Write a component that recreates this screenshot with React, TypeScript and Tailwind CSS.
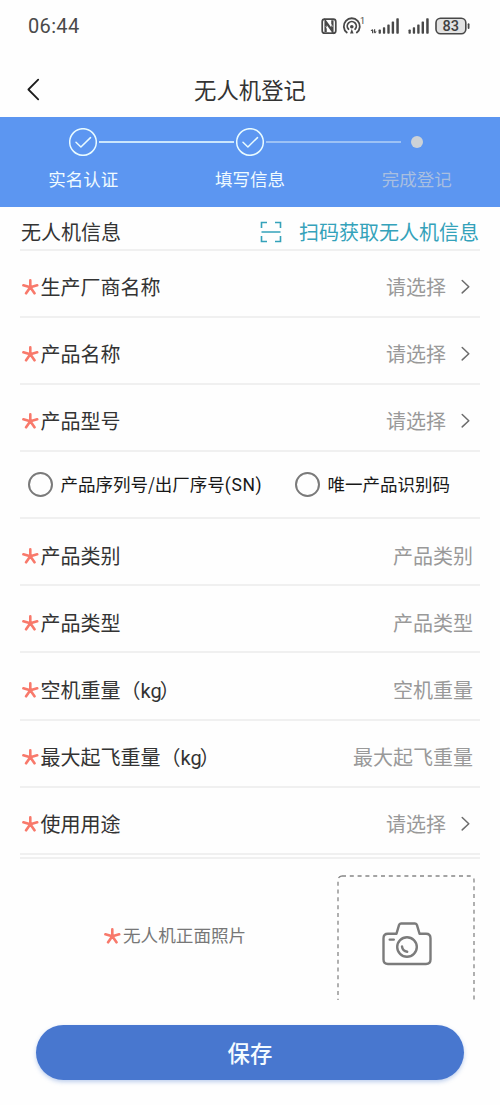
import { clsx } from 'clsx'

interface Field {
    label: string
    unit?: string
    value: string
    select?: boolean
}

const productFields: Field[] = [
    { label: '生产厂商名称', value: '请选择', select: true },
    { label: '产品名称', value: '请选择', select: true },
    { label: '产品型号', value: '请选择', select: true },
]

const detailFields: Field[] = [
    { label: '产品类别', value: '产品类别' },
    { label: '产品类型', value: '产品类型' },
    { label: '空机重量', unit: 'kg', value: '空机重量' },
    { label: '最大起飞重量', unit: 'kg', value: '最大起飞重量' },
    { label: '使用用途', value: '请选择', select: true },
]

function RequiredMark() {
    return (
        <svg className="h-4 w-[17px] shrink-0" viewBox="0 0 17 16" fill="none" stroke="#f8796b" strokeWidth="2.6" strokeLinecap="round">
            <path d="M8.3 8.2V1.4M8.3 8.2L1.4 6.3M8.3 8.2L15.2 6.3M8.3 8.2L4.1 14.3M8.3 8.2L12.5 14.3" />
        </svg>
    )
}

function StatusBar() {
    return (
        <div className="flex h-[52px] items-center justify-between pl-7 pr-[30px] text-[#4a4a4a]">
            <span className="font-['Roboto',sans-serif] text-[20px] leading-6 tracking-[0.35px]">06:44</span>
            <div className="flex items-center">
                <svg className="h-[22px] w-[150px]" viewBox="320 14 150 22" fill="none" stroke="#484848">
                    <rect x="322.2" y="18.2" width="13.6" height="14" rx="2.5" strokeWidth="1.7" />
                    <path d="M325.6 31V20.5L332.4 30V19.2" strokeWidth="2.3" />
                    <path d="M328 19.5L332.6 25.5M325.8 25.5L330 31.3" stroke="#fff" strokeWidth=".8" />
                    <g strokeWidth="1.8" strokeLinecap="round">
                        <path d="M346.8 31.5A8 8 0 1 1 356.8 31.5" />
                        <path d="M348.5 28.2A4.5 4.5 0 1 1 355.1 28.2" />
                    </g>
                    <circle cx="351.8" cy="25.8" r="1.8" fill="#484848" stroke="none" />
                    <path d="M350 32.4L351.8 28L353.6 32.4Z" fill="#484848" stroke="none" />
                    <text x="360" y="23.2" fill="#484848" stroke="none" fontSize="9" fontFamily="Roboto, sans-serif">1</text>
                    <g fill="#484848" stroke="none">
                        <path d="M370.5 30L372.3 28L373.3 29.2V32.2H372V30ZM374 28.2H375.2V30.4H376.8L375 32.6L374 31.4Z" />
                        <rect x="378.6" y="28.5" width="2.3" height="4.3" rx=".7" />
                        <rect x="382.9" y="26.2" width="2.3" height="6.6" rx=".7" />
                        <rect x="387.3" y="23.4" width="2.4" height="9.4" rx=".7" />
                        <rect x="391.7" y="20.4" width="2.4" height="12.4" rx=".7" />
                        <rect x="396.3" y="17.2" width="2.5" height="15.6" rx=".7" />
                        <rect x="408.5" y="28.5" width="2.3" height="4.3" rx=".7" />
                        <rect x="412.8" y="26.2" width="2.3" height="6.6" rx=".7" />
                        <rect x="417.2" y="23.4" width="2.4" height="9.4" rx=".7" />
                        <rect x="421.6" y="20.4" width="2.4" height="12.4" rx=".7" />
                        <rect x="426.2" y="17.2" width="2.5" height="15.6" rx=".7" />
                    </g>
                    <rect x="436" y="17.2" width="29.8" height="15.6" rx="4.5" fill="#e2e2e2" strokeWidth="1.6" />
                    <path d="M468.6 23.2V27" strokeWidth="1.8" strokeLinecap="round" />
                    <text x="450.8" y="30" textAnchor="middle" fill="#404040" stroke="none" fontSize="14.5" fontWeight="500" fontFamily="Roboto, sans-serif">83</text>
                </svg>
            </div>
        </div>
    )
}

function Header() {
    return (
        <header className="grid h-[65px] grid-cols-[1fr_auto_1fr] items-center pb-px pt-3">
            <svg className="ml-[26px] h-6 w-4" viewBox="0 0 16 24" fill="none" stroke="#1c1c1c" strokeWidth="1.8" strokeLinecap="round" strokeLinejoin="round">
                <path d="M12.2 1.7L2.4 11.5L12.2 21.3" />
            </svg>
            <h1 className="-mt-0.5 text-[22.4px] leading-8 text-[#333]">无人机登记</h1>
            <span />
        </header>
    )
}

function StepCheck() {
    return (
        <svg className="h-7 w-7" viewBox="0 0 28 28" fill="none" stroke="#e9fbff" strokeWidth="1.5" strokeLinecap="round" strokeLinejoin="round">
            <circle cx="14" cy="14" r="13.3" />
            <path d="M7 14.3L11.9 19L21.5 9.6" />
        </svg>
    )
}

function Steps() {
    return (
        <div className="h-[90px] bg-[#5c96f1] pt-[10.5px] text-[17.5px] text-[#f0fbff]">
            <div className="flex h-7 items-center pl-[69px]">
                <StepCheck />
                <div className="ml-0.5 h-0.5 w-[135px] bg-[#cbe6fc]" />
                <div className="ml-[1.5px]">
                    <StepCheck />
                </div>
                <div className="ml-0.5 h-0.5 w-[135px] bg-[#9dc2f5]" />
                <div className="ml-[10px] h-3 w-3 rounded-full bg-[#cdd2d7]" />
            </div>
            <div className="grid grid-cols-3 pt-[10px] text-center leading-[26px]">
                <span>实名认证</span>
                <span>填写信息</span>
                <span className="text-[#a9bfe0]">完成登记</span>
            </div>
        </div>
    )
}

function FieldRow({ label, unit, value, select = false }: Field) {
    return (
        <div className="flex h-[67.1px] items-center border-b-2 border-[#f0f0f0] pt-[8px] text-[20px] leading-[30px]">
            <div className="flex items-center pl-[1.5px]">
                <RequiredMark />
                <span className="ml-[2px] text-[#333]">
                    {label}
                    {unit && (
                        <>
                            （<span className="-mr-0.5 font-['Roboto',sans-serif] leading-none">{unit}</span>）
                        </>
                    )}
                </span>
            </div>
            <div className={clsx('ml-auto flex items-center text-[#999]', select ? 'pr-[9px]' : 'pr-[7px]')}>
                <span>{value}</span>
                {select && (
                    <svg className="ml-[14px] h-4 w-[11px]" viewBox="0 0 11 16" fill="none" stroke="#6c6c6c" strokeWidth="1.5" strokeLinecap="round" strokeLinejoin="round">
                        <path d="M2.2 1.5L8.8 7.7L2.2 13.9" />
                    </svg>
                )}
            </div>
        </div>
    )
}

function Radio({ label, code }: { label: string; code?: string }) {
    return (
        <label className="flex items-center">
            <span className="h-[25px] w-[25px] rounded-full border-[2.5px] border-[#7a7a7a]" />
            <span className="-mt-px ml-2 text-[17.5px] leading-[26px] text-[#181818]">
                {label}
                {code && <span className="font-['Roboto',sans-serif] leading-none tracking-[0.6px]">{code}</span>}
            </span>
        </label>
    )
}

function CameraIcon() {
    return (
        <svg className="ml-0.5 mt-0.5 h-[46px] w-[52px]" viewBox="0 0 52 46" fill="none" stroke="#7b7b7b" strokeWidth="2.4" strokeLinecap="round" strokeLinejoin="round">
            <path d="M15.5 12.7L18 4.2Q18.4 2.5 20 2.5H34Q35.6 2.5 36 4.2L38.5 12.7H45Q49.5 12.7 49.5 17.2V38.5Q49.5 43 45 43H7Q2.5 43 2.5 38.5V17.2Q2.5 12.7 7 12.7Z" />
            <circle cx="26" cy="26" r="9.8" />
            <path d="M21 25.5Q21.6 30 26.2 30.8M8.7 18.6H12.8" />
        </svg>
    )
}

function PhotoRow() {
    return (
        <div className="flex h-[143px] items-start overflow-hidden border-t-2 border-[#f0f0f0]">
            <div className="flex items-center pl-[84px] pt-[64.5px]">
                <RequiredMark />
                <span className="-mt-px ml-[2px] text-[17.6px] leading-[26px] text-[#777]">无人机正面照片</span>
            </div>
            <div className="relative ml-auto mr-[5px] mt-[16px] flex h-[137px] w-[138px] shrink-0 items-center justify-center">
                <svg className="absolute inset-0 h-full w-full" viewBox="0 0 138 137" fill="none" stroke="#868686" strokeWidth="1.3" strokeDasharray="4 3.8">
                    <rect x="1" y="1" width="136" height="135" rx="4" />
                </svg>
                <CameraIcon />
            </div>
        </div>
    )
}

export default function App() {
    return (
        <div className="flex h-[1105px] w-[500px] flex-col overflow-hidden bg-[#fefefe] font-['Noto_Sans_CJK_SC',sans-serif]">
            <StatusBar />
            <Header />
            <Steps />

            <main className="px-5">
                <div className="flex h-[43.5px] items-center border-b-2 border-[#f0f0f0] pt-[7.5px] text-[20px] leading-[30px]">
                    <span className="pl-px text-[#333]">无人机信息</span>
                    <div className="ml-auto flex items-center pr-px text-[#34a2ba]">
                        <svg className="mr-[17px] h-[22px] w-[22px]" viewBox="0 0 22 22" fill="none" stroke="currentColor" strokeWidth="1.6">
                            <path d="M1.5 7V1.5H7M15 1.5H20.5V7M20.5 15V20.5H15M7 20.5H1.5V15M1.5 11H20.5" />
                        </svg>
                        <span>扫码获取无人机信息</span>
                    </div>
                </div>

                {productFields.map((field) => (
                    <FieldRow key={field.label} {...field} />
                ))}

                <div className="flex h-[67.5px] items-center border-b-2 border-[#f0f0f0] pl-[7.5px]">
                    <div className="w-[267px]">
                        <Radio label="产品序列号/出厂序号" code="(SN)" />
                    </div>
                    <Radio label="唯一产品识别码" />
                </div>

                {detailFields.map((field) => (
                    <FieldRow key={field.label} {...field} />
                ))}

                <div className="pt-[2px]">
                    <PhotoRow />
                </div>
            </main>

            <footer className="mt-auto px-9 pb-[25px]">
                <button className="h-[55px] w-full rounded-full bg-[#4877cf] text-[22.4px] font-medium text-[#f4fbff] shadow-[0_2px_4px_rgba(72,119,207,0.35)]">
                    保存
                </button>
            </footer>
        </div>
    )
}
